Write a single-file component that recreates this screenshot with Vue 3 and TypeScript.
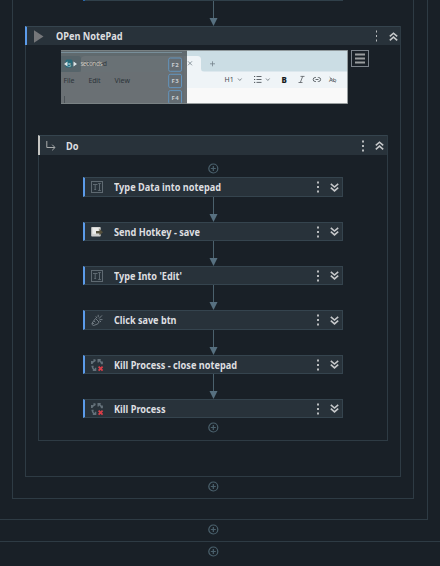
<script setup lang="ts">
import { h, type FunctionalComponent } from 'vue'

type IconName = 'type' | 'hotkey' | 'click' | 'kill'

interface Activity {
  title: string
  icon: IconName
  height: number
  width: number
}

const activities: Activity[] = [
  { title: 'Type Data into notepad', icon: 'type', height: 20, width: 107 },
  { title: 'Send Hotkey - save', icon: 'hotkey', height: 19, width: 86 },
  { title: "Type Into 'Edit'", icon: 'type', height: 19, width: 68 },
  { title: 'Click save btn', icon: 'click', height: 20, width: 62.5 },
  { title: 'Kill Process - close notepad', icon: 'kill', height: 19, width: 123 },
  { title: 'Kill Process', icon: 'kill', height: 19, width: 51.5 },
]

const keys = ['F2', 'F3', 'F4']

const AddPoint: FunctionalComponent = () =>
  h('svg', { width: 11, height: 11, viewBox: '0 0 11 11', fill: 'none', stroke: '#4b616d', style: 'display:block' }, [
    h('circle', { cx: 5.3, cy: 5.5, r: 4.5, 'stroke-width': 1.2 }),
    h('path', { d: 'M5.3 3v5M2.8 5.5h5', 'stroke-width': 1.2 }),
  ])

const Arrow: FunctionalComponent = () =>
  h('svg', { width: 9, height: 25, viewBox: '0 0 9 25', style: 'display:block' }, [
    h('path', { d: 'M4.5 0v18', stroke: '#4b616d', 'stroke-width': 1 }),
    h('path', { d: 'M.5 17h8L4.5 25z', fill: '#577080' }),
  ])

const Dots: FunctionalComponent = () =>
  h('svg', { width: 2, height: 12, viewBox: '0 0 2 12', preserveAspectRatio: 'none', fill: '#b9bcbe', style: 'display:block' }, [
    h('path', { d: 'M0 .5h2v2H0zM0 5h2v2H0zM0 9.5h2v2H0z' }),
  ])

const Chevrons: FunctionalComponent<{ up?: boolean }> = (props) =>
  h('svg', { width: 9, height: 9, viewBox: '0 0 9 9', fill: 'none', stroke: '#c6c8ca', 'stroke-width': 1.6, style: 'display:block' }, [
    h('path', { d: props.up ? 'M.8 4.4 4.5 1.2 8.200 4.400M.8 8.300 4.500 5.100 8.200 8.300' : 'M.8.8 4.500 4 8.200.8M.8 4.700 4.500 7.900 8.200 4.700' }),
  ])
Chevrons.props = { up: Boolean }
</script>

<template>
  <div class="canvas">
    <div class="level-a">
      <div class="level-b">
        <div class="stub"></div>
        <Arrow class="mid" />
        <section class="scope">
          <header class="head scope-head">
            <svg class="play" width="10" height="13" viewBox="0 0 10 13"><path d="M0 .3 9.5 6.5 0 12.7z" fill="#75777a" /></svg>
            <svg class="title" height="16"><text x="0" y="12" textLength="66.500" lengthAdjust="spacingAndGlyphs">OPen NotePad</text></svg>
            <Dots class="dots thin" /><Chevrons up />
          </header>
          <div class="preview">
            <svg width="287" height="54" viewBox="0 0 287 54" class="shot">
              <rect width="287" height="54" fill="#f9f9f9" />
              <rect width="287" height="22" fill="#cbdde4" />
              <rect y="21.5" width="287" height="16.5" fill="#eff4f7" />
              <path d="M126 6h10.500q3.500 0 3.500 3.500v9q0 3 3 3.500h-17z" fill="#eff4f7" />
              <path d="M127 11.300l4 4m0-4l-4 4M149 13.800h5m-2.500-2.500v5" stroke="#74818a" stroke-width=".8" />
              <text x="163.500" y="32.400" class="tool">H1</text>
              <path d="M177 28.500l1.800 2 1.800-2M205 28.500l1.800 2 1.800-2" fill="none" stroke="#778087" stroke-width=".9" />
              <path d="M195.500 26.500h5M195.500 29.500h5M195.500 32.400h5" stroke="#50575c" stroke-width=".9" />
              <path d="M193 26.500h1.200M193 29.500h1.200M193 32.400h1.200" stroke="#50575c" />
              <text x="220.500" y="32.700" class="tool bold">B</text>
              <path d="M239.500 26.400h4M237.500 32.500h4M241.700 26.400l-2.400 6.100" stroke="#555b60" stroke-width=".8" />
              <path d="M255 27.500h-.8a2 2 0 0 0 0 4h.8M256.800 27.500h.8a2 2 0 0 1 0 4h-.8M254.500 29.500h3" fill="none" stroke="#555b60" stroke-width=".9" />
              <text x="268" y="31.600" class="tool tiny">Ab</text>
              <path d="M268.500 27l6 5.500" stroke="#6a7277" stroke-width=".7" />
              <rect width="126" height="54" fill="#6a7074" />
              <rect width="126" height="22" fill="#606a6e" />
              <path d="M0 6h17q3 0 3 3v10q0 3-3 3H0z" fill="#56646a" />
              <path d="M20 22V10q0-4 4-4h102v16z" fill="#697175" />
              <path d="M0 2.500h121" stroke="#788e99" />
              <rect x="4.500" y="9.500" width="7" height="8" rx="1.500" fill="#276b7b" />
              <path d="M6.500 11.500L3 14l3.500 2.500zM12.500 11.500L16 14l-3.500 2.500z" fill="#dce5e8" />
              <text x="6.800" y="16.500" class="count">5</text>
              <text x="23" y="16" class="tab" textLength="23">Untitled</text>
              <text x="19.500" y="16.200" class="wait" textLength="22">seconds</text>
              <text x="2.500" y="33" class="menu" textLength="11">File</text>
              <text x="27.500" y="33" class="menu" textLength="12">Edit</text>
              <text x="53.500" y="33" class="menu" textLength="15.500">View</text>
              <path d="M3.500 46v7" stroke="#4c5358" />
              <path d="M122 0v54" stroke="#616b72" stroke-width="1" />
              <g v-for="(key, i) in keys" :key="key">
                <rect x="107.700" :y="8 + i * 16.300" width="12.800" height="13.300" rx="1.500" fill="#646c72" stroke="#6394bd" stroke-width="1" />
                <text x="110.600" :y="16.900 + i * 16.300" class="key" textLength="7">{{ key }}</text>
              </g>
              <path d="M0 .5h287M0 53.500h287M286.500 0v54" stroke="#7f8788" fill="none" stroke-width=".8" />
            </svg>
            <span class="options">
              <svg width="10" height="11" viewBox="0 0 10 11"><path d="M0 1.500h10M0 5.500h10M0 9.500h10" stroke="#9a9d9f" stroke-width="2" /></svg>
            </span>
          </div>
          <section class="body">
            <header class="head body-head">
              <svg class="turn" width="10" height="10" viewBox="0 0 10 10" fill="none" stroke="#a8abac"><path d="M.8 0v6.500h8M6.200 3.700l2.800 2.800-2.800 2.800" /></svg>
              <svg class="title" height="16"><text x="0" y="11.500" textLength="12.500" lengthAdjust="spacingAndGlyphs">Do</text></svg>
              <Dots class="dots" /><Chevrons up />
            </header>
            <AddPoint class="mid add-first" />
            <template v-for="(item, i) in activities" :key="i">
              <Arrow v-if="i > 0" class="mid" />
              <div class="head item" :style="{ height: item.height + 'px' }">
                <svg class="icon" width="14" height="14" viewBox="-1 -1 14 14" fill="none">
                  <g v-if="item.icon === 'type'" stroke="#5f6a72">
                    <rect x=".5" y=".5" width="11" height="11" />
                    <path d="M2 3.500h4.500M4.200 3.500v5M3.300 8.500h1.800M7.200 2.500h2.600M8.500 2.500v7M7.200 9.500h2.600" stroke-width="1" />
                  </g>
                  <g v-else-if="item.icon === 'hotkey'">
                    <rect x=".2" y="1" width="9.500" height="9.500" rx=".8" fill="#cfcfcd" />
                    <rect x="1.500" y="1.800" width="6" height="6" fill="#ebebe9" />
                    <path d="M5 5h3.500V2.800L12 6.200 8.500 9.200V7.600H5z" fill="#55503c" />
                  </g>
                  <g v-else-if="item.icon === 'click'" stroke="#78828a" stroke-width=".9">
                    <path d="M4.500 4.500L8 8Q7.600 10 5 10.600L2.500 11.500Q.6 11 1 9.200L2.800 6.800 4.500 4.500M2.800 6.800l1.600 1.400M1 9.200l2 .3M6 4.200L4.800 2.400M7.200 3.200V.8M8 4.600L11 1.400M8.500 5.600h3M8.400 6.800l1.600 1" />
                  </g>
                  <g v-else>
                    <path d="M1 4.700Q1.300 2.600 4.300 1.500M.7 2v3M2.500.7l2.200.7M7.200 1.400Q10 2 10.800 5M7.200 3.500V.8h2.500M11.200 2.500v2.800M1 6.800Q1.300 9.500 4 11M.6 7.500h2M1.800 11.300h2.800V8.700" stroke="#64717a" stroke-width="1.400" />
                    <path d="M7.600 7.600l4 4M11.600 7.600l-4 4" stroke="#d83e48" stroke-width="1.800" />
                  </g>
                </svg>
                <svg class="label" width="150" height="16">
                  <text x="0" y="12" :textLength="item.width" lengthAdjust="spacingAndGlyphs">{{ item.title }}</text>
                </svg>
                <Dots class="dots" /><Chevrons />
              </div>
            </template>
            <AddPoint class="mid add-last" />
          </section>
        </section>
        <AddPoint class="mid add-b" />
      </div>
      <AddPoint class="mid add-a" />
    </div>
    <div class="level-root"><AddPoint class="mid add-root" /></div>
  </div>
</template>

<style>
body {
  background: #192027;
  overflow: hidden;
}
</style>

<style scoped>
* {
  box-sizing: border-box;
}
.canvas {
  width: 440px;
  height: 566px;
  overflow: hidden;
  background: #192027;
  font-family: 'Noto Sans', sans-serif;
  color: #dedfe0;
}
.level-a {
  width: 428px;
  height: 520px;
  border: solid #2e3b44;
  border-width: 0 1px 1px 0;
}
.level-b {
  width: 402px;
  height: 499px;
  margin-left: 12px;
  border: solid #2e3b44;
  border-width: 0 1px 1px;
}
.stub {
  width: 260px;
  height: 1px;
  margin-left: 70px;
  background: #30404a;
  border-left: 2px solid #2765a8;
}
.mid {
  margin-left: 195px;
}
.level-b > .mid:not(.add-b) {
  margin-left: 196px;
}
.scope {
  width: 376px;
  height: 451px;
  margin-left: 12px;
  border: 1px solid #2e3b44;
  border-top: 0;
}
.head {
  display: flex;
  align-items: center;
  background: #28323a;
  border-top: 1px solid #35444e;
}
.scope-head {
  height: 19px;
  margin-left: -1px;
  border-left: 2px solid #5b9bea;
  padding: 0 2px 0 7px;
}
.play {
  width: 10px;
}
.title {
  flex: 1;
  min-width: 0;
  font-size: 10px;
  font-weight: 700;
  fill: #dedfe0;
}
.scope-head .title {
  margin-left: 11.5px;
}
.dots {
  margin-right: 12px;
}
.thin {
  width: 1px;
  flex: none;
}
.preview {
  display: flex;
  height: 90px;
  padding: 5px 0 0 35px;
}
.shot {
  display: block;
  flex: none;
}
.options {
  display: flex;
  align-items: center;
  justify-content: center;
  width: 18px;
  height: 17px;
  margin-left: 3px;
  border: 1px solid #7b838b;
}
.tool {
  font-size: 7px;
  fill: #454c51;
}
.bold {
  font-weight: 800;
  font-size: 8px;
  fill: #15191c;
}
.tiny {
  font-size: 6px;
}
.count {
  font-size: 6px;
  fill: #c3d9de;
}
.tab {
  font-size: 7px;
  fill: #343b40;
}
.wait {
  font-size: 6.5px;
  fill: #c9c6be;
}
.menu {
  font-size: 7px;
  fill: #2c343a;
}
.key {
  font-size: 6px;
  font-weight: 700;
  fill: #c9ced2;
}
.body {
  width: 350px;
  height: 306px;
  margin-left: 12px;
  border: 1px solid #2e3b44;
  border-top: 0;
}
.body-head {
  height: 20px;
  margin-left: -1px;
  border-left: 2px solid #c5c5c2;
  padding: 0 3px 0 6px;
}
.body-head .title {
  margin-left: 10px;
}
.body-head .dots {
  margin-right: 11px;
}
.body .mid {
  margin-left: 170px;
}
.body .add-first {
  margin: 8px 0 3px 169px;
}
.item {
  width: 260px;
  margin-left: 44px;
  border: 1px solid #35444e;
  border-left: 2px solid #5b9bea;
  padding: 0 3px 0 5px;
}
.icon {
  flex: none;
}
.label {
  flex: none;
  margin-left: 10px;
  margin-right: 53px;
  font-size: 10px;
  font-weight: 700;
  fill: #dedfe0;
}
.item .dots {
  flex: none;
  margin-right: 11px;
}
.body .add-last {
  margin: 4px 0 0 169px;
}
.level-b .add-b {
  margin-top: 4px;
}
.level-a .add-a {
  margin: 25px 0 0 208px;
}
.level-root {
  margin-top: 21px;
  border-top: 1px solid #2e3b44;
}
.level-root .add-root {
  margin: 4px 0 0 208px;
}
</style>
